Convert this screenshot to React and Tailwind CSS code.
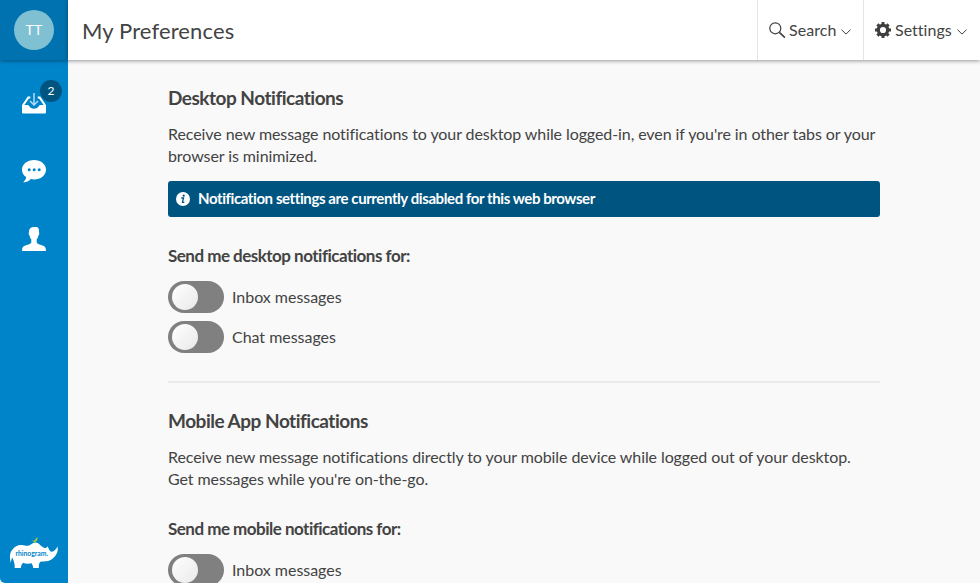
function InboxIcon() {
  return (
    <svg width="24" height="21" viewBox="0 0 24 21" fill="none">
      <path d="M8.300 4.600H6.300L1 12.300M15.700 4.600h2L23 12.300" stroke="#fff" strokeWidth="2" />
      <path d="M0 12h5.200c1.300 0 1.800.6 2.300 1.500.9 1.400 2.300 2.200 4.500 2.200s3.600-.8 4.500-2.200c.5-.9 1-1.500 2.300-1.500H24v7.200c0 .8-.5 1.300-1.300 1.300H1.300C.5 20.500 0 20 0 19.200z" fill="#fff" />
      <path d="M12 0v11.500M8 8l4 4 4-4" stroke="#b4dcf2" strokeWidth="1.500" />
    </svg>
  );
}

function ChatIcon() {
  return (
    <svg width="24" height="23" viewBox="0 0 24 23">
      <path d="M12 0C5.300 0 0 4.300 0 9.700c0 3 1.600 5.600 4.200 7.400-.2 2-1.200 3.800-3 5.300 3.200-.1 5.700-1.200 7.500-3.300 1 .2 2.200.4 3.300.4 6.700 0 12-4.300 12-9.800S18.700 0 12 0z" fill="#fff" />
      <circle cx="7.200" cy="9.700" r="1.500" fill="#0084c9" />
      <circle cx="12.200" cy="9.700" r="1.500" fill="#0084c9" />
      <circle cx="17.200" cy="9.700" r="1.500" fill="#0084c9" />
    </svg>
  );
}

function PersonIcon() {
  return (
    <svg width="24" height="24" viewBox="0 0 24 24" fill="#fff">
      <path d="M7 4.500C6.900 1.800 8.800 0 12 0h3.200l.8 1c1 .6 1.200 2 .9 4.200.6.300.5 2.600-.5 3.200-.3 1.800-.9 3-1.700 3.900v3c.4 1.700 2 2 4.500 2.800 3.300 1 4.800 2 4.800 5.900H0c0-3.900 1.500-4.900 4.800-5.900 2.500-.8 4.100-1.100 4.500-2.800v-3c-.8-.9-1.400-2.100-1.700-3.900-1-.6-1.200-2.900-.6-3.200z" />
    </svg>
  );
}

function RhinoLogo() {
  return (
    <svg width="50" height="34" viewBox="0 0 50 34">
      <path d="M2 26C.2 20.500.7 15.500 3.500 12.500 6 9 9.500 7.500 13 8c3 .5 4.500 1.200 7 .5 2-.6 3.600-3 6.300-3 3.400 0 5 3.200 8.200 5 1.200.7 2.400.6 3.200.1l.9-1.300 1 2.300c.7 2 1.900 3.400 3.300 3.200 2.200-.4 4.300-2.600 5.600-5.400 1.500 5.500-2.200 10.900-7 13.600-3 1.700-6.400 1.300-9 1.500-2 .4-2.600 2-2.700 6.500h-5.500c-.3-2-.9-3.600-1.800-4.800-3 .7-6 .6-8.500-.4-1.200 1.500-2 3-2.200 5.200H5.700C6 27 4.800 24 3.300 20.500 2.300 22.500 2 24 2 26z" fill="#fff" />
      <path d="M22.800 3.300c1.300.6 2.500.4 3.300-.6L28.200 0l.3 1.800c-.2 2-1.400 2.800-2.500 3l-.3 2.200-.9-2z" fill="#a6ce39" />
      <text x="6.500" y="18.800" textLength="32.500" lengthAdjust="spacingAndGlyphs" className="font-['Lato',sans-serif] text-[7px] font-bold" fill="#0084c9">rhinogram.</text>
    </svg>
  );
}

function Chevron() {
  return (
    <svg width="10" height="6" viewBox="0 0 10 6" fill="none" stroke="#3f3f3f" strokeWidth="1">
      <path d="M.5.700 5 5.100 9.500.700" />
    </svg>
  );
}

function SearchIcon() {
  return (
    <svg width="17" height="17" viewBox="0 0 17 17" fill="none" stroke="#3f3f3f">
      <circle cx="6.300" cy="6.300" r="5.500" strokeWidth="1.200" />
      <path d="m10.400 10.400 5.500 5.300" strokeWidth="1.600" />
    </svg>
  );
}

function GearIcon() {
  return (
    <svg width="16" height="16" viewBox="0 0 16 16">
      <g fill="none" stroke="#3f3f3f">
        <circle cx="8" cy="8" r="4.700" strokeWidth="3.200" />
        <path strokeWidth="3" d="M8 0v3M8 13v3M0 8h3M13 8h3M2.400 2.400l2 2M11.600 11.600l2 2M2.400 13.600l2-2M11.600 4.400l2-2" />
      </g>
    </svg>
  );
}

function InfoIcon() {
  return (
    <svg width="14" height="14" viewBox="0 0 14 14">
      <circle cx="7" cy="7" r="7" fill="#fff" />
      <circle cx="7.700" cy="3.700" r="1.100" fill="#005580" />
      <path d="M5.300 6h2.200L6.500 10.300h1.800" fill="none" stroke="#005580" strokeWidth="1.300" />
    </svg>
  );
}

function Toggle({ label }) {
  return (
    <div className="flex h-8 items-center gap-2">
      <div className="flex h-8 w-14 items-center rounded-full bg-[#808080] pl-1">
        <div className="h-[26px] w-[26px] rounded-full bg-linear-to-br from-white to-[#e9e9e9]" />
      </div>
      <span className="tracking-[-0.03px]">{label}</span>
    </div>
  );
}

function Section({ title, text, label, banner, children }) {
  return (
    <section className="flex flex-col">
      <h2 className="text-[19px] leading-6 font-bold tracking-[-0.49px]">{title}</h2>
      <p className="mt-[13px] leading-[22px]">{text}</p>
      {banner}
      <h3 className="mt-[27px] text-[17px] leading-6 font-bold tracking-[-0.51px]">{label}</h3>
      <div className="mt-[13px] flex flex-col gap-2">{children}</div>
    </section>
  );
}

export default function App() {
  return (
    <div className="flex h-[583px] w-[980px] overflow-hidden bg-[#f9f9f9] font-['Lato',sans-serif] text-[16px] text-[#434343]">
      <aside className="flex w-[68px] shrink-0 flex-col items-center rounded-bl-[5px] bg-[#0084c9]">
        <div className="flex h-[60px] w-full shrink-0 items-center justify-center bg-[#0072b0] shadow-[0_1px_4px_rgba(0,0,0,0.4)]">
          <div className="flex h-10 w-10 items-center justify-center rounded-full bg-[#7fc0d3] pb-px text-[14px] tracking-[0.3px] text-white">TT</div>
        </div>
        <div className="relative mt-[33px]">
          <InboxIcon />
          <span className="absolute -top-[13px] left-[18px] flex h-[22px] w-[22px] items-center justify-center rounded-full bg-[#005580] text-[12px] text-white">2</span>
        </div>
        <div className="mt-[46px]"><ChatIcon /></div>
        <div className="mt-[44px]"><PersonIcon /></div>
        <div className="mt-auto mb-[12px]"><RhinoLogo /></div>
      </aside>
      <div className="flex flex-1 flex-col">
        <header className="z-10 flex h-[60px] shrink-0 bg-white shadow-[0_1px_4px_rgba(0,0,0,0.4)]">
          <h1 className="flex flex-1 items-center pl-[14px] text-[22px] tracking-[0.13px]">My Preferences</h1>
          <div className="flex w-[106px] items-center border-l border-[#e5e5e5] pl-[11px]">
            <SearchIcon />
            <span className="ml-[3px] tracking-[0.05px]">Search</span>
            <span className="mt-[3px] ml-[5px]"><Chevron /></span>
          </div>
          <div className="flex w-[117px] items-center border-l border-[#e5e5e5] pl-[11px]">
            <GearIcon />
            <span className="ml-1 tracking-[0.03px]">Settings</span>
            <span className="mt-[3px] ml-[5px]"><Chevron /></span>
          </div>
        </header>
        <main className="flex h-[523px] flex-col overflow-hidden pt-[26px] pr-[100px] pl-[100px] tracking-[-0.085px]">
          <Section
            title="Desktop Notifications"
            text="Receive new message notifications to your desktop while logged-in, even if you're in other tabs or your browser is minimized."
            label="Send me desktop notifications for:"
            banner={
              <div className="mt-[14px] flex h-9 items-center gap-2 rounded-[3px] bg-[#005580] pb-px pl-2 text-[15px] font-bold tracking-[-0.41px] text-white">
                <InfoIcon />
                <span>Notification settings are currently disabled for this web browser</span>
              </div>
            }
          >
            <Toggle label="Inbox messages" />
            <Toggle label="Chat messages" />
          </Section>
          <hr className="mt-7 mb-[26px] shrink-0 border-t-2 border-[#ebebeb]" />
          <Section
            title="Mobile App Notifications"
            text="Receive new message notifications directly to your mobile device while logged out of your desktop. Get messages while you're on-the-go."
            label="Send me mobile notifications for:"
          >
            <Toggle label="Inbox messages" />
          </Section>
        </main>
      </div>
    </div>
  );
}
